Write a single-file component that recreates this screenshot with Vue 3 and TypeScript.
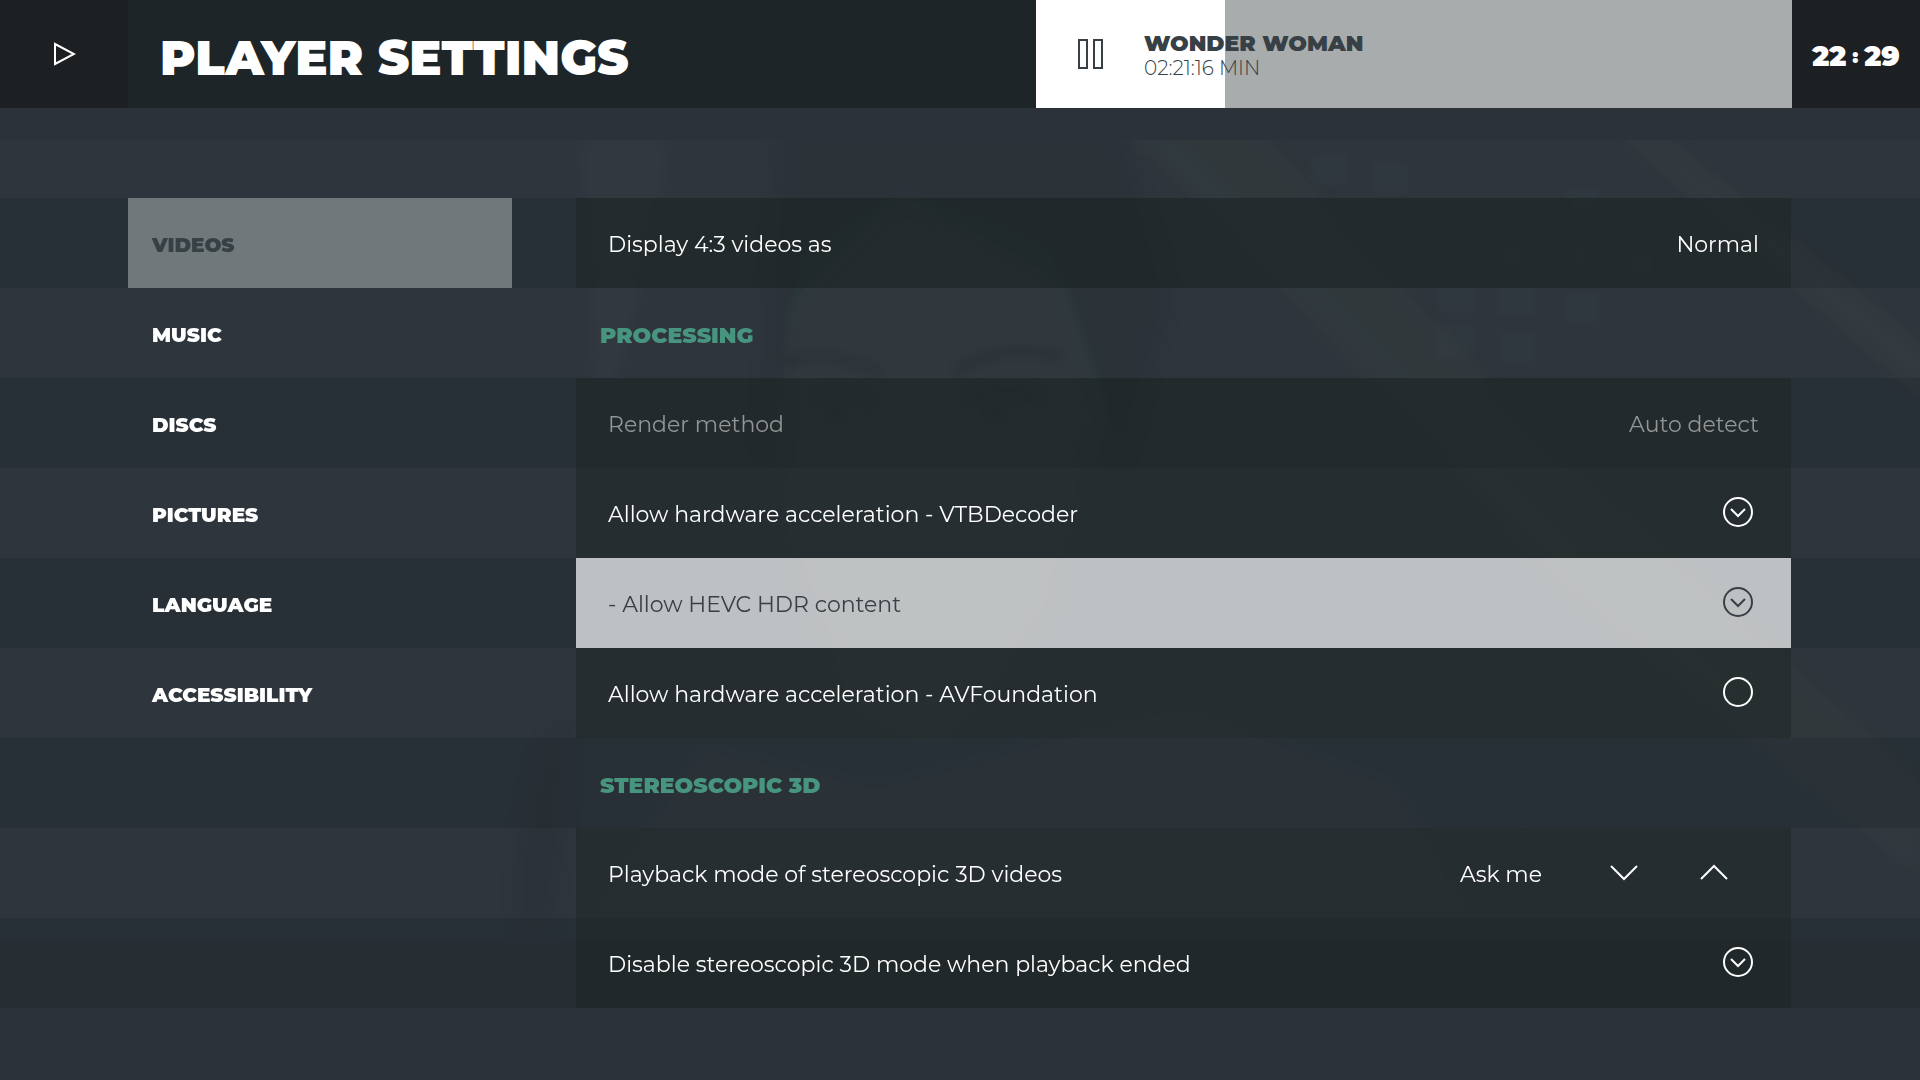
<script setup lang="ts">
import { ref } from 'vue'

type Category = { id: string; label: string }
type Row =
  | { kind: 'heading'; label: string }
  | { kind: 'choice'; id: string; label: string; options: string[]; disabled?: boolean }
  | { kind: 'toggle'; id: string; label: string; on: boolean; focused?: boolean }
  | { kind: 'spinner'; id: string; label: string; options: string[]; index: number }

const categories: Category[] = [
  { id: 'videos', label: 'Videos' },
  { id: 'music', label: 'Music' },
  { id: 'discs', label: 'Discs' },
  { id: 'pictures', label: 'Pictures' },
  { id: 'language', label: 'Language' },
  { id: 'accessibility', label: 'Accessibility' },
]
const activeCategory = ref('videos')

const rows = ref<Row[]>([
  { kind: 'choice', id: 'aspect', label: 'Display 4:3 videos as', options: ['Normal'] },
  { kind: 'heading', label: 'Processing' },
  { kind: 'choice', id: 'render', label: 'Render method', options: ['Auto detect'], disabled: true },
  { kind: 'toggle', id: 'vtb', label: 'Allow hardware acceleration - VTBDecoder', on: true },
  { kind: 'toggle', id: 'hdr', label: '- Allow HEVC HDR content', on: true, focused: true },
  { kind: 'toggle', id: 'avf', label: 'Allow hardware acceleration - AVFoundation', on: false },
  { kind: 'heading', label: 'Stereoscopic 3D' },
  { kind: 'spinner', id: 'mode3d', label: 'Playback mode of stereoscopic 3D videos', options: ['Ask me'], index: 0 },
  { kind: 'toggle', id: 'end3d', label: 'Disable stereoscopic 3D mode when playback ended', on: true },
])

const progress = ref(25)

function step(row: Row, by: number) {
  if (row.kind !== 'spinner') return
  row.index = (row.index + by + row.options.length) % row.options.length
}
</script>

<template>
  <div class="screen">
    <svg class="artwork" viewBox="0 0 1920 800" preserveAspectRatio="none" aria-hidden="true">
      <defs>
        <filter id="soft"><feGaussianBlur stdDeviation="10" /></filter>
        <filter id="faint"><feGaussianBlur stdDeviation="4" /></filter>
      </defs>
      <rect width="1920" height="800" fill="#e8fff8" opacity="0.014" />
      <g filter="url(#soft)">
        <path d="M580 0H670L640 150 600 300Z" fill="#f0fff8" opacity="0.02" />
        <path d="M780 -20H1120L1170 160 1120 330 1060 150 900 60 800 160 760 330Z" fill="#000810" opacity="0.05" />
        <path d="M1140 -10H1260L1560 320 1920 640V700L1570 430Z" fill="#b8e878" opacity="0.02" />
        <path d="M1130 -10H1160L1580 430 1920 700V740L1560 440Z" fill="#e0ffc8" opacity="0.02" />
        <path d="M1620 -10H1650L1930 215V260Z" fill="#d8f0b0" opacity="0.035" />
        <path d="M800 120Q900 20 1050 110L1100 260 1050 470 940 610 850 570 780 380Z" fill="#d8f0c8" opacity="0.014" />
        <path d="M520 800Q510 690 545 600L570 570Q570 680 545 800Z" fill="#000" opacity="0.05" />
        <path d="M570 800L700 600 880 640 1180 560 1400 640 1490 800Z" fill="#e8fff0" opacity="0.01" />
      </g>
      <g filter="url(#faint)" fill="none" stroke="#000410" opacity="0.08">
        <path d="M785 222Q830 208 880 232" stroke-width="10" />
        <path d="M955 232Q1010 198 1062 218" stroke-width="12" />
        <path d="M815 256Q845 246 872 262" stroke-width="7" />
        <path d="M965 260Q1000 242 1040 256" stroke-width="9" />
        <circle cx="836" cy="272" r="7" fill="#000" />
        <circle cx="994" cy="270" r="8" fill="#000" />
      </g>
      <g filter="url(#faint)" fill="#b8d0f0" opacity="0.014">
        <rect x="1310" y="12" width="38" height="34" />
        <rect x="1372" y="20" width="38" height="34" />
        <rect x="1564" y="45" width="36" height="32" />
        <rect x="1494" y="98" width="40" height="34" />
        <rect x="1562" y="98" width="36" height="34" />
        <rect x="1624" y="108" width="36" height="34" />
        <rect x="1436" y="140" width="40" height="34" />
        <rect x="1496" y="144" width="40" height="34" />
        <rect x="1564" y="150" width="36" height="34" />
        <rect x="1434" y="182" width="42" height="38" />
        <rect x="1498" y="190" width="38" height="34" />
      </g>
    </svg>

    <header class="topbar">
      <button class="corner" type="button" aria-label="Play">
        <svg width="24" height="24" viewBox="0 0 24 24" aria-hidden="true">
          <path d="M3 2L22 12 3 22Z" fill="none" stroke="currentColor" stroke-width="2" />
        </svg>
      </button>
      <h1 class="title">Player settings</h1>
      <section class="playing" aria-label="Now playing">
        <div class="progress" :style="{ width: progress + '%' }"></div>
        <button class="pause" type="button" aria-label="Pause">
          <svg width="28" height="30" viewBox="0 0 28 30" fill="none" stroke="currentColor" stroke-width="2" aria-hidden="true">
            <rect x="3" y="1" width="8" height="28" />
            <rect x="18" y="1" width="8" height="28" />
          </svg>
        </button>
        <div class="track">
          <strong>Wonder Woman</strong>
          <span>02:21:16 MIN</span>
        </div>
      </section>
      <time class="corner clock" datetime="22:29"><span>22</span><i>:</i><span>29</span></time>
    </header>

    <main class="content">
      <nav class="categories" aria-label="Categories">
        <button
          v-for="c in categories"
          :key="c.id"
          type="button"
          class="category"
          :class="{ active: c.id === activeCategory }"
          @click="activeCategory = c.id"
        >
          {{ c.label }}
        </button>
      </nav>

      <div class="settings">
        <template v-for="(row, i) in rows" :key="i">
          <h2 v-if="row.kind === 'heading'" class="heading">{{ row.label }}</h2>

          <div v-else-if="row.kind === 'choice'" class="row" :class="{ disabled: row.disabled }">
            <label class="text" :for="row.id">{{ row.label }}</label>
            <select :id="row.id" class="choice text" :disabled="row.disabled">
              <option v-for="o in row.options" :key="o">{{ o }}</option>
            </select>
          </div>

          <div v-else-if="row.kind === 'toggle'" class="row" :class="{ focused: row.focused }">
            <label class="text" :for="row.id">{{ row.label }}</label>
            <span class="toggle">
              <input :id="row.id" v-model="row.on" type="checkbox" />
              <svg v-if="row.on" width="30" height="30" viewBox="0 0 30 30" aria-hidden="true">
                <path d="M8 12L15 19 22 12" fill="none" stroke="currentColor" stroke-width="2" />
              </svg>
            </span>
          </div>

          <div v-else class="row" role="group" :aria-label="row.label">
            <span class="text">{{ row.label }}</span>
            <span class="spinner">
              <output class="text">{{ row.options[row.index] }}</output>
              <button type="button" aria-label="Next" @click="step(row, 1)">
                <svg width="30" height="18" viewBox="0 0 30 18" aria-hidden="true">
                  <path d="M2 2L15 15 28 2" fill="none" stroke="currentColor" stroke-width="2" />
                </svg>
              </button>
              <button type="button" aria-label="Previous" @click="step(row, -1)">
                <svg width="30" height="18" viewBox="0 0 30 18" aria-hidden="true">
                  <path d="M2 15L15 2 28 15" fill="none" stroke="currentColor" stroke-width="2" />
                </svg>
              </button>
            </span>
          </div>
        </template>
      </div>
    </main>
  </div>
</template>

<style>
body {
  background: #2b3239;
}
</style>

<style scoped>
.screen {
  position: relative;
  display: flex;
  flex-direction: column;
  min-height: 100vh;
  color: #fff;
  font-family: Montserrat, Inter, "Open Sans", sans-serif;
  font-size: 22px;
  font-weight: 400;
}

.screen * {
  box-sizing: border-box;
}

.artwork {
  position: absolute;
  top: 140px;
  left: 0;
  width: 100%;
  height: 800px;
}

button {
  margin: 0;
  padding: 0;
  border: 0;
  background: none;
  color: inherit;
  font: inherit;
  cursor: pointer;
}

svg {
  display: block;
}

.topbar {
  position: relative;
  display: grid;
  grid-template-columns: 128px 1fr 756px 128px;
  height: 108px;
  background: #1e2528;
}

.corner {
  display: flex;
  align-items: center;
  justify-content: center;
  background: #1c2023;
}

.title {
  align-self: center;
  margin: 0;
  padding: 8px 0 0 32px;
  font-size: 48px;
  line-height: 56px;
  font-weight: 900;
  text-transform: uppercase;
}

.playing {
  position: relative;
  display: flex;
  align-items: center;
  background: #a8acad;
  color: #364045;
}

.progress {
  position: absolute;
  inset: 0 auto 0 0;
  background: #fff;
}

.pause {
  position: relative;
  display: flex;
  justify-content: center;
  width: 108px;
}

.track {
  position: relative;
  display: flex;
  flex-direction: column;
  padding-top: 3px;
  font-size: 20px;
  line-height: 24px;
  font-weight: 300;
}

.track strong {
  font-size: 22px;
  font-weight: 900;
  text-transform: uppercase;
}

.clock {
  gap: 6px;
  padding-top: 4px;
  font-size: 28px;
  font-weight: 900;
}

.clock i {
  font-size: 20px;
  font-style: normal;
}

.content {
  position: relative;
  display: grid;
  grid-template-columns: 384px 1fr;
  align-items: start;
  gap: 64px;
  margin: 90px 0 72px;
  padding: 0 129px 0 128px;
  background: repeating-linear-gradient(rgba(16, 26, 30, 0.18) 0 90px, transparent 90px 180px);
}

.categories,
.settings {
  display: flex;
  flex-direction: column;
}

.category {
  height: 90px;
  padding: 4px 24px 0;
  font-size: 20px;
  font-weight: 900;
  text-align: left;
  text-transform: uppercase;
}

.category.active {
  background: rgba(250, 255, 250, 0.35);
  color: #364045;
}

.heading {
  height: 90px;
  margin: 0;
  padding: 5px 24px 0;
  color: #48957f;
  font-size: 22px;
  line-height: 86px;
  font-weight: 900;
  text-transform: uppercase;
}

.row {
  display: flex;
  align-items: center;
  justify-content: space-between;
  height: 90px;
  padding: 0 32px;
  background: rgba(28, 35, 34, 0.45);
}

.row.disabled {
  color: #929495;
}

.row.focused {
  background: rgba(255, 255, 255, 0.7);
  color: #364045;
}

.text {
  padding: 3px 0 0;
}

.choice {
  border: 0;
  appearance: none;
  background: none;
  color: inherit;
  font: inherit;
  text-align-last: right;
  opacity: 1;
}

.toggle {
  display: grid;
  margin: 0 6px 2px 0;
}

.toggle > * {
  grid-area: 1 / 1;
  pointer-events: none;
}

.toggle input {
  width: 30px;
  height: 30px;
  margin: 0;
  border: 2px solid currentColor;
  border-radius: 50%;
  appearance: none;
  color: inherit;
  pointer-events: auto;
}

.spinner {
  display: flex;
  align-items: center;
}

.spinner output {
  margin-right: 37px;
}

.spinner button {
  display: flex;
  justify-content: center;
  width: 90px;
}
</style>
